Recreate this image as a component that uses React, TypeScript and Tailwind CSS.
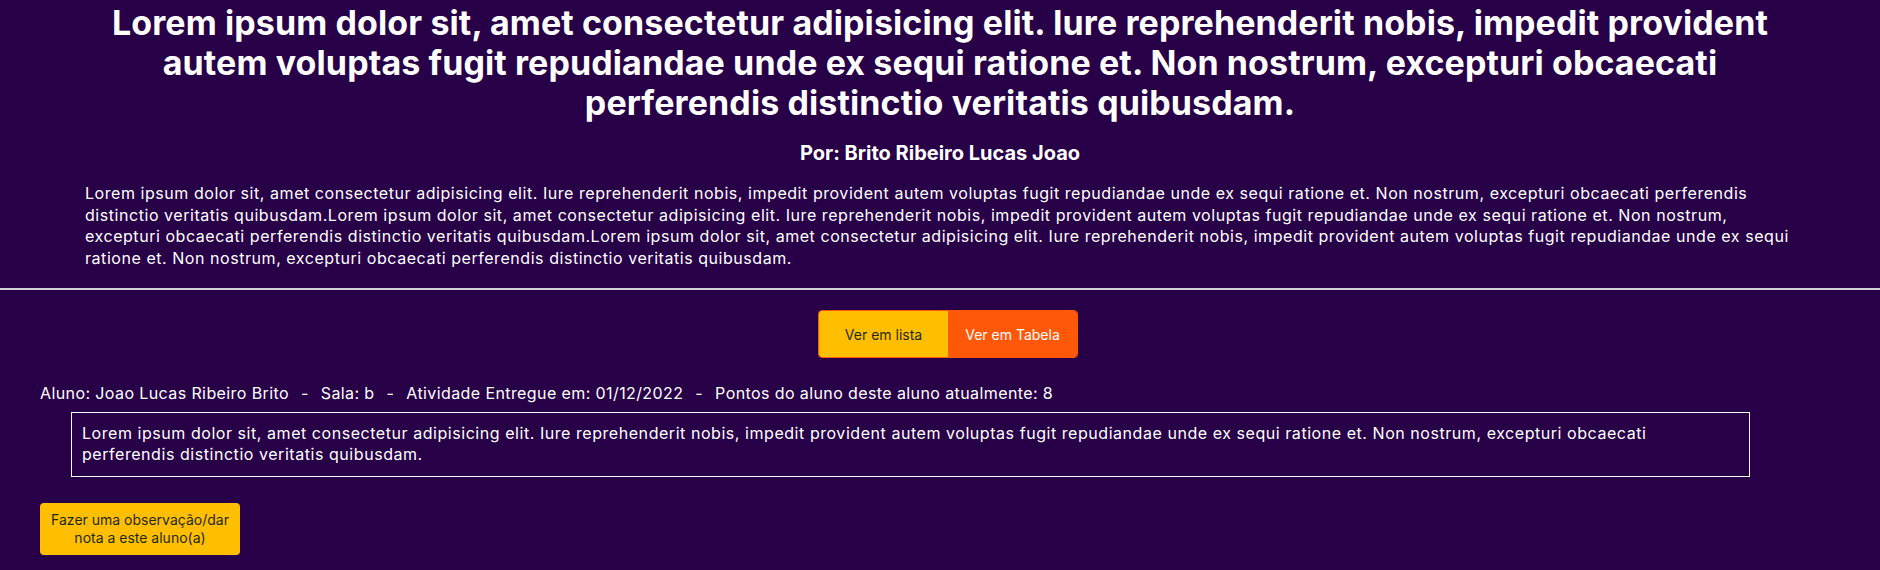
import React from "react";

const lorem =
  "Lorem ipsum dolor sit, amet consectetur adipisicing elit. Iure reprehenderit nobis, impedit provident autem voluptas fugit repudiandae unde ex sequi ratione et. Non nostrum, excepturi obcaecati perferendis distinctio veritatis quibusdam.";

export default function App() {
  return (
    <div
      className="min-h-[570px] w-full bg-[#270048] text-white"
      style={{ fontFamily: "Inter, 'Noto Sans', sans-serif" }}
    >
      <div className="mx-auto w-[1720px] pt-[3px]">
        <h1 className="text-center text-[34px] font-bold leading-[40px] tracking-[0.1px]">{lorem}</h1>
        <p className="mt-[18px] text-center text-[20px] font-bold leading-[24px]">
          Por: Brito Ribeiro Lucas Joao
        </p>
      </div>
      <p className="ml-[85px] mt-[18px] w-[1720px] text-[16px] leading-[21.5px] tracking-[0.55px]">
        {lorem}
        {lorem}
        {lorem}
      </p>
      <div className="mt-[19px] h-[2px] w-full bg-[#d4d0d8]" />
      <div className="mt-[20px] flex justify-center pl-[16px]">
        <div className="flex h-[48px] overflow-hidden rounded-[4px] border border-[#ff5808] text-[14px]">
          <button className="w-[129px] bg-[#ffbf00] text-[#1f2a14]">Ver em lista</button>
          <button className="w-[129px] bg-[#ff5808] text-white">Ver em Tabela</button>
        </div>
      </div>
      <div className="mt-[25px] px-[40px] text-[16px] leading-[21.5px] tracking-[0.4px]">
        <span>Aluno: Joao Lucas Ribeiro Brito</span>
        <span className="mx-[12px]">-</span>
        <span>Sala: b</span>
        <span className="mx-[12px]">-</span>
        <span>Atividade Entregue em: 01/12/2022</span>
        <span className="mx-[12px]">-</span>
        <span>Pontos do aluno deste aluno atualmente: 8</span>
      </div>
      <div className="ml-[71px] mt-[7px] w-[1679px] border border-white px-[10px] py-[10px] text-[16px] leading-[21.5px] tracking-[0.55px]">
        {lorem}
      </div>
      <div className="px-[40px] pt-[26px]">
        <button className="h-[52px] w-[200px] rounded-[4px] bg-[#ffbf00] px-[10px] text-[14px] leading-[18px] text-[#1f2a14]">
          Fazer uma observação/dar nota a este aluno(a)
        </button>
      </div>
    </div>
  );
}
